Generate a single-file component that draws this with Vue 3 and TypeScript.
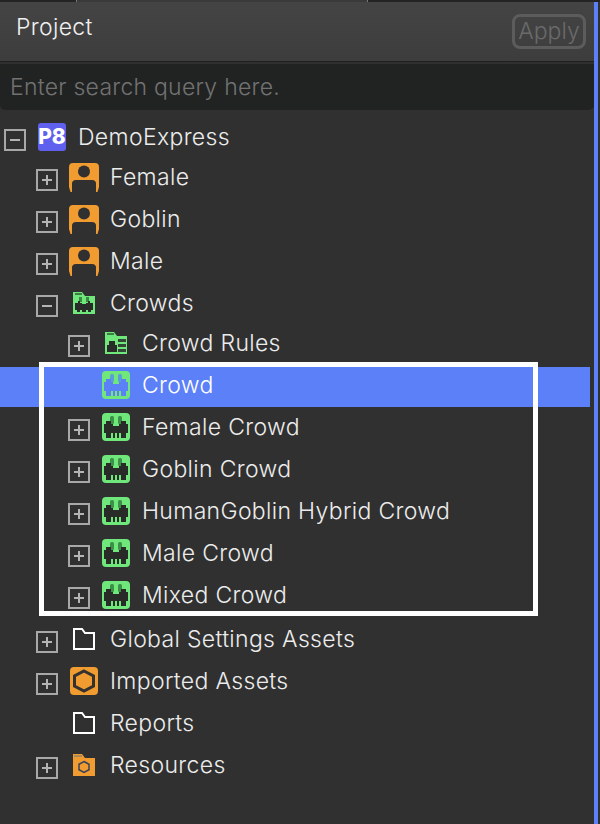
<template>
  <div class="panel">
    <div class="top-strip"><span class="top-tab"></span></div>
    <div class="content">
      <header class="header">
        <span class="title">Project</span>
        <button class="apply" type="button" disabled>Apply</button>
      </header>
      <div class="search">Enter search query here.</div>

      <ul class="tree">
        <li
          v-for="row in rows"
          :key="row.label"
          class="row"
          :class="[`depth-${row.depth}`, row.spacing, { selected: row.selected }]"
        >
          <span v-if="row.toggle" class="toggle">
            <span class="bar"></span>
            <span v-if="row.toggle === 'plus'" class="bar vertical"></span>
          </span>
          <span v-else class="toggle-spacer"></span>

          <span class="icon-slot">
            <svg v-if="row.icon === 'project'" width="28" height="28" viewBox="0 0 28 28">
              <rect width="28" height="28" rx="3" fill="#5f61ee" />
              <text x="14" y="21" text-anchor="middle" class="p8">P8</text>
            </svg>

            <svg v-else-if="row.icon === 'person'" width="30" height="29" viewBox="0 0 30 29">
              <path
                d="M4 0h22a4 4 0 0 1 4 4v20l-1.500 5H27v-7a4 4 0 0 0-4-4H7a4 4 0 0 0-4 4v7H1.500L0 24V4a4 4 0 0 1 4-4z"
                fill="#f19c30"
              />
              <path d="M3 29v-8a4 4 0 0 1 4-4h16a4 4 0 0 1 4 4v8z" fill="#303030" />
              <circle cx="15" cy="8.500" r="6" fill="#303030" />
            </svg>

            <svg v-else-if="row.icon === 'crowdFolder'" width="22" height="22" viewBox="0 0 22 22">
              <path d="M0 0h9l3 4h10v18H0z" fill="#6fe77b" />
              <path d="M2 1h7v2H2z" fill="#3b7d42" />
              <rect x="6" y="5" width="3" height="5" fill="#3b8a44" />
              <rect x="13" y="5" width="3" height="5" fill="#3b8a44" />
              <path d="M2 11h3V9h2v2h2v1h4v-1h2V9h2v2h3v7h-2v2h-3v-2h-2v2h-4v-2H7v2H4v-2H2z" fill="#2a2c2a" />
            </svg>

            <svg v-else-if="row.icon === 'rulesFolder'" width="22" height="22" viewBox="0 0 22 22">
              <path d="M0 0h9l3 4h10v18H0z" fill="#6fe77b" />
              <path d="M2 1h7v2H2z" fill="#3b7d42" />
              <path d="M2 13h2V9h6v4h2v7H2z" fill="#2a2c2a" />
              <path d="M13 7h8v3h-8zM13 12h8v3h-8zM13 17h8v3h-8z" fill="#2a2c2a" opacity="0.85" />
            </svg>

            <svg v-else-if="row.icon === 'crowd'" width="28" height="28" viewBox="0 0 28 28">
              <rect width="28" height="28" rx="4" fill="#6fe77b" />
              <g :fill="row.selected ? '#5b9fd8' : '#3c9047'">
                <rect x="8" y="3" width="4" height="8" rx="1.500" />
                <rect x="16" y="3" width="4" height="8" rx="1.500" />
              </g>
              <path
                :fill="row.selected ? '#5b80f8' : '#282b28'"
                d="M2 11h2V8h5v3h2v2h6v-2h2V8h5v3h2v9h-2v5h-5v-5h-2v5h-2v-5h-2v5h-2v-5H9v5H4v-5H2z"
              />
            </svg>

            <svg v-else-if="row.icon === 'folder'" width="22" height="22" viewBox="0 0 22 22">
              <path d="M1 1h8l3 4h9v16H1z" fill="none" stroke="#ffffff" stroke-width="2" />
            </svg>

            <svg v-else-if="row.icon === 'imported'" width="28" height="28" viewBox="0 0 28 28">
              <rect width="28" height="28" rx="4" fill="#f19c30" />
              <path d="M14 4l9.500 5v10L14 24l-9.500-5V9z" fill="none" stroke="#34322f" stroke-width="3" />
            </svg>

            <svg v-else-if="row.icon === 'assetFolder'" width="22" height="22" viewBox="0 0 22 22">
              <path d="M0 0h9l3 4h10v18H0z" fill="#f19c30" />
              <path d="M1 1h8v2H1z" fill="#a98a58" />
              <path d="M11 7.500l5 2.800v5.400l-5 2.800-5-2.800v-5.400z" fill="none" stroke="#37415a" stroke-width="1.500" />
            </svg>
          </span>

          <span class="label">{{ row.label }}</span>
        </li>
      </ul>
    </div>
    <div class="focus-box"></div>
  </div>
</template>

<script setup lang="ts">
type IconName =
  | 'project'
  | 'person'
  | 'crowdFolder'
  | 'rulesFolder'
  | 'crowd'
  | 'folder'
  | 'imported'
  | 'assetFolder'

interface TreeRow {
  label: string
  depth: 0 | 1 | 2
  icon: IconName
  toggle?: 'plus' | 'minus'
  spacing?: 'tight' | 'wide'
  selected?: boolean
}

const rows: TreeRow[] = [
  { label: 'DemoExpress', depth: 0, icon: 'project', toggle: 'minus', spacing: 'tight' },
  { label: 'Female', depth: 1, icon: 'person', toggle: 'plus' },
  { label: 'Goblin', depth: 1, icon: 'person', toggle: 'plus' },
  { label: 'Male', depth: 1, icon: 'person', toggle: 'plus' },
  { label: 'Crowds', depth: 1, icon: 'crowdFolder', toggle: 'minus', spacing: 'tight' },
  { label: 'Crowd Rules', depth: 2, icon: 'rulesFolder', toggle: 'plus' },
  { label: 'Crowd', depth: 2, icon: 'crowd', selected: true },
  { label: 'Female Crowd', depth: 2, icon: 'crowd', toggle: 'plus' },
  { label: 'Goblin Crowd', depth: 2, icon: 'crowd', toggle: 'plus' },
  { label: 'HumanGoblin Hybrid Crowd', depth: 2, icon: 'crowd', toggle: 'plus' },
  { label: 'Male Crowd', depth: 2, icon: 'crowd', toggle: 'plus' },
  { label: 'Mixed Crowd', depth: 2, icon: 'crowd', toggle: 'plus' },
  { label: 'Global Settings Assets', depth: 1, icon: 'folder', toggle: 'plus', spacing: 'wide' },
  { label: 'Imported Assets', depth: 1, icon: 'imported', toggle: 'plus' },
  { label: 'Reports', depth: 1, icon: 'folder' },
  { label: 'Resources', depth: 1, icon: 'assetFolder', toggle: 'plus' },
]
</script>

<style>
html,
body {
  margin: 0;
  background: #303030;
}
</style>

<style scoped>
.panel {
  position: relative;
  width: 600px;
  height: 824px;
  overflow: hidden;
  background: #303030;
  font-family: Inter, 'Liberation Sans', sans-serif;
  font-weight: 300;
  letter-spacing: 0.33px;
}

.top-strip {
  height: 2px;
  background: #242424;
}

.top-tab {
  display: block;
  width: 290px;
  height: 2px;
  margin-left: 76px;
  background: #3a3a3a;
  border-left: 1px solid #777;
  border-right: 1px solid #777;
}

.content {
  width: 594px;
  height: 822px;
  border-right: 4px solid #5b80f8;
}

.header {
  display: flex;
  align-items: center;
  justify-content: space-between;
  height: 60px;
  padding: 0 8px 0 16px;
  box-sizing: border-box;
  background: linear-gradient(#444444, #3d3d3d);
  border-bottom: 1px solid #1f1f1f;
}

.title {
  position: relative;
  top: -5px;
  font-size: 23px;
  color: #f0f0f0;
}

.apply {
  width: 74px;
  height: 35px;
  padding: 0;
  box-sizing: border-box;
  border: 3px solid #5c5c5c;
  border-radius: 8px;
  background: transparent;
  font-family: inherit;
  font-weight: 300;
  font-size: 23px;
  line-height: 1;
  color: #6a6a6a;
}

.search {
  height: 46px;
  margin-top: 2px;
  padding-left: 10px;
  box-sizing: border-box;
  border-radius: 0 0 5px 5px;
  background: #212322;
  font-size: 23px;
  line-height: 46px;
  letter-spacing: 0.25px;
  color: #727272;
}

.tree {
  list-style: none;
  margin: 0;
  padding: 9px 0 0;
  width: 590px;
}

.row {
  display: flex;
  height: 40px;
  margin-bottom: 2px;
  box-sizing: border-box;
}

.row.tight {
  margin-bottom: 0;
}

.row.wide {
  margin-top: 4px;
}

.depth-0 {
  padding-left: 4px;
}

.depth-1 {
  padding-left: 36px;
}

.depth-2 {
  padding-left: 68px;
}

.selected {
  background: #5b80f8;
}

.toggle,
.toggle-spacer {
  position: relative;
  flex: none;
  width: 22px;
  height: 22px;
  margin-top: 10px;
  box-sizing: border-box;
}

.toggle {
  border: 2px solid #a8a8a8;
}

.bar {
  position: absolute;
  left: 4px;
  top: 8px;
  width: 10px;
  height: 2px;
  background: #b4b4b4;
}

.bar.vertical {
  left: 8px;
  top: 4px;
  width: 2px;
  height: 10px;
}

.icon-slot {
  display: flex;
  flex: none;
  align-items: center;
  justify-content: center;
  width: 32px;
  height: 36px;
  margin: 0 10px 0 10px;
}

.p8 {
  font-family: Inter, 'Liberation Sans', sans-serif;
  font-size: 21px;
  font-weight: 800;
  letter-spacing: 0;
  fill: #ffffff;
}

.label {
  font-size: 23px;
  line-height: 36px;
  white-space: nowrap;
  color: #ececec;
}

.selected .label {
  color: #ffffff;
}

.focus-box {
  position: absolute;
  left: 39px;
  top: 362px;
  width: 489px;
  height: 244px;
  border: 5px solid #ffffff;
}
</style>
